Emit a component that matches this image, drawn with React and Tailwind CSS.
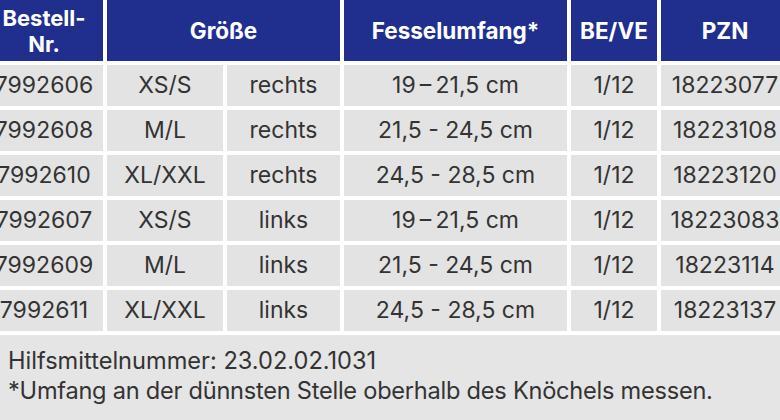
import React from "react";

const rows = [
  ["7992606", "XS/S", "rechts", "19\u2009–\u200921,5 cm", "1/12", "18223077"],
  ["7992608", "M/L", "rechts", "21,5 - 24,5 cm", "1/12", "18223108"],
  ["7992610", "XL/XXL", "rechts", "24,5 - 28,5 cm", "1/12", "18223120"],
  ["7992607", "XS/S", "links", "19\u2009–\u200921,5 cm", "1/12", "18223083"],
  ["7992609", "M/L", "links", "21,5 - 24,5 cm", "1/12", "18223114"],
  ["7992611", "XL/XXL", "links", "24,5 - 28,5 cm", "1/12", "18223137"],
];

const App = () => {
  return (
    <div className="w-[780px] h-[420px] overflow-hidden bg-[#e5e5e5] font-['Inter',sans-serif] text-[#333]">
      <div className="-ml-[15px] w-[804px] bg-white pb-[4px]">
        <div className="grid grid-cols-[118px_116px_113px_223px_86px_128px] gap-[4px]">
          <div className="h-[61px] bg-[#202f8e] text-white font-bold text-[22px] leading-[26px] flex items-center justify-center text-center">
            Bestell-
            <br />
            Nr.
          </div>
          <div className="col-span-2 bg-[#202f8e] text-white font-bold text-[22.5px] flex items-center justify-center">
            Größe
          </div>
          <div className="bg-[#202f8e] text-white font-bold text-[22.5px] flex items-center justify-center">
            Fesselumfang*
          </div>
          <div className="bg-[#202f8e] text-white font-bold text-[22.5px] flex items-center justify-center">
            BE/VE
          </div>
          <div className="bg-[#202f8e] text-white font-bold text-[22.5px] flex items-center justify-center">
            PZN
          </div>

          {rows.map((r) =>
            r.map((c, i) => (
              <div
                key={r[0] + i}
                className="h-[41px] bg-[#e3e3e3] text-[23px] flex items-center justify-center whitespace-nowrap"
              >
                {c}
              </div>
            ))
          )}
        </div>
      </div>
      <div className="pl-[8px] pt-[11px] text-[23.6px] leading-[30px]">
        <p>Hilfsmittelnummer: 23.02.02.1031</p>
        <p className="tracking-[-0.25px]">*Umfang an der dünnsten Stelle oberhalb des Knöchels messen.</p>
      </div>
    </div>
  );
};

export default App;
